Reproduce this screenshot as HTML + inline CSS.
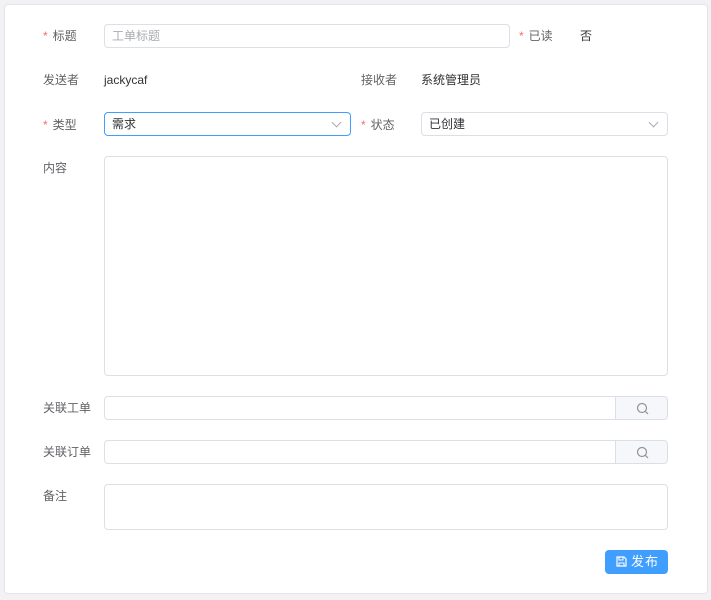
<!DOCTYPE html>
<html><head><meta charset="utf-8"><style>
*{box-sizing:border-box;margin:0;padding:0}
body{width:711px;height:600px;background:#f2f2f4;font-family:"Liberation Sans","Noto Sans CJK SC",sans-serif;font-size:12px;color:#606266;position:relative;overflow:hidden}
.card{position:absolute;left:4px;top:4px;width:704px;height:590px;background:#fff;border:1px solid #e4e5ea;border-radius:4px}
.a{position:absolute;white-space:nowrap;line-height:16px}
.star{color:#f56c6c;margin-right:5px}
.in{position:absolute;border:1px solid #dcdfe6;border-radius:4px;background:#fff;height:24px;line-height:22px;padding-left:7px;color:#303133}
.ph{color:#a8abb2}
.arrow{position:absolute;right:10px;top:6px;width:7px;height:7px;border-right:1px solid #a8abb2;border-bottom:1px solid #a8abb2;transform:rotate(45deg)}
.btn{position:absolute;background:#f5f7fa;border:1px solid #dcdfe6;border-radius:0 4px 4px 0}
.val{color:#303133}
</style></head><body>
<div class="card"></div>
<div class="a" style="left:43px;top:28px"><span class="star">*</span>标题</div>
<div class="in ph" style="left:104px;top:24px;width:406px">工单标题</div>
<div class="a" style="left:519px;top:28px"><span class="star">*</span>已读</div>
<div class="a val" style="left:580px;top:28px">否</div>
<div class="a" style="left:43px;top:72px">发送者</div>
<div class="a val" style="left:104px;top:72px">jackycaf</div>
<div class="a" style="left:361px;top:72px">接收者</div>
<div class="a val" style="left:421px;top:72px">系统管理员</div>
<div class="a" style="left:43px;top:117px"><span class="star">*</span>类型</div>
<div class="in" style="left:104px;top:112px;width:247px;border-color:#409eff">需求<span class="arrow"></span></div>
<div class="a" style="left:361px;top:117px"><span class="star">*</span>状态</div>
<div class="in" style="left:421px;top:112px;width:247px">已创建<span class="arrow"></span></div>
<div class="a" style="left:43px;top:160px">内容</div>
<div class="in" style="left:104px;top:156px;width:564px;height:220px"></div>
<div class="a" style="left:43px;top:400px">关联工单</div>
<div class="in" style="left:104px;top:396px;width:513px;border-radius:4px 0 0 4px"></div>
<div class="btn" style="left:615px;top:396px;width:53px;height:24px"><svg width="14" height="14" style="position:absolute;left:20px;top:5px" viewBox="0 0 14 14"><circle cx="6" cy="6" r="4.5" fill="none" stroke="#909399" stroke-width="1.2"/><path d="M9.3 9.3L12 12" stroke="#909399" stroke-width="1.2"/></svg></div>
<div class="a" style="left:43px;top:444px">关联订单</div>
<div class="in" style="left:104px;top:440px;width:513px;border-radius:4px 0 0 4px"></div>
<div class="btn" style="left:615px;top:440px;width:53px;height:24px"><svg width="14" height="14" style="position:absolute;left:20px;top:5px" viewBox="0 0 14 14"><circle cx="6" cy="6" r="4.5" fill="none" stroke="#909399" stroke-width="1.2"/><path d="M9.3 9.3L12 12" stroke="#909399" stroke-width="1.2"/></svg></div>
<div class="a" style="left:43px;top:488px">备注</div>
<div class="in" style="left:104px;top:484px;width:564px;height:46px"></div>
<div class="a" style="left:605px;top:550px;width:63px;height:24px;background:#409eff;border-radius:4px;color:#fff;line-height:24px;padding-left:11px;font-size:13px;letter-spacing:1px"><svg width="11" height="11" viewBox="0 0 11 11" style="vertical-align:-1px;margin-right:4px"><path d="M1 1h7l2 2v7H1z" fill="none" stroke="#fff" stroke-width="1.2"/><path d="M3 1v3h4V1M3 10V7h5v3" fill="none" stroke="#fff" stroke-width="1"/></svg>发布</div>
</body></html>
